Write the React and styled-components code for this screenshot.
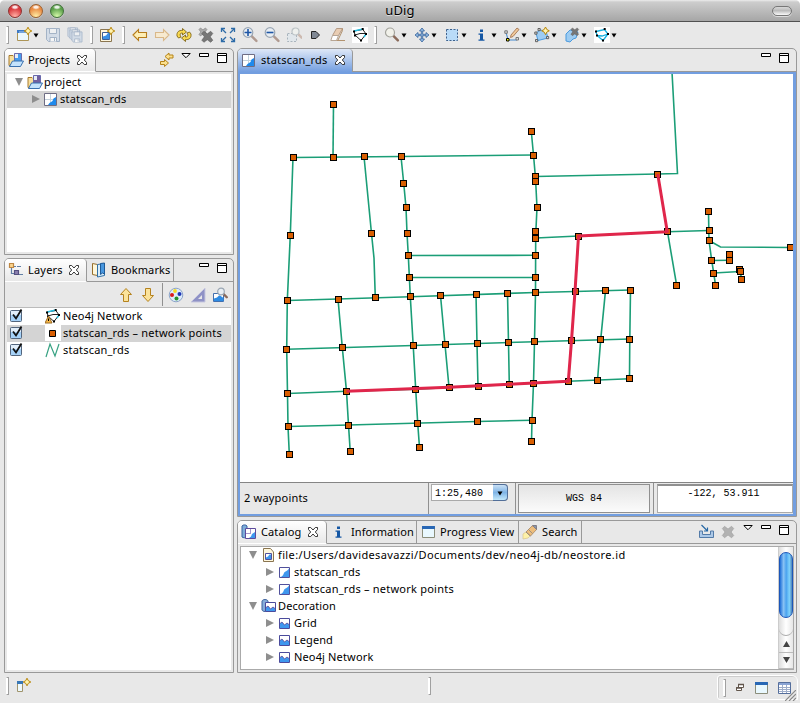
import React from 'react';
import styled, { createGlobalStyle, css } from 'styled-components';

const Global = createGlobalStyle`
  * { box-sizing: border-box; }
  html, body { margin: 0; padding: 0; background: #fff; }
  body { width: 800px; height: 703px; overflow: hidden; font: 11px/17px 'Noto Sans', 'Open Sans', sans-serif; color: #000; }
  svg { display: block; flex: none; }
`;

const Window = styled.div`
  width: 800px;
  height: 703px;
  display: flex;
  flex-direction: column;
  background: #e8e8e8;
  border-radius: 5px 5px 0 0;
  overflow: hidden;
`;

const TitleBar = styled.header`
  height: 22px;
  flex: none;
  display: grid;
  grid-template-columns: 100px 1fr 100px;
  align-items: center;
  background: linear-gradient(#ececec 0, #cdcdcd 2px, #a6a6a6 21px);
  border-bottom: 1px solid #515151;
`;
const Lights = styled.div`
  display: flex;
  gap: 7px;
  padding-left: 8px;
`;
const Light = styled.span`
  width: 14px;
  height: 14px;
  border-radius: 50%;
  border: 1px solid ${(p) => p.$edge};
  background: radial-gradient(ellipse 4px 2.5px at 50% 18%, #fffd 40%, transparent 100%),
    radial-gradient(circle at 50% 95%, ${(p) => p.$glow} 5%, ${(p) => p.$tone} 65%);
  box-shadow: 0 1px 0 #ddd8;
`;
const Title = styled.div`
  text-align: center;
  font-size: 13px;
  letter-spacing: 0.1px;
  text-shadow: 0 1px 0 #ddd;
`;
const Pill = styled.span`
  justify-self: end;
  margin-right: 8px;
  width: 20px;
  height: 10px;
  border: 1px solid #777;
  border-radius: 5px;
  background: linear-gradient(#d8d8d8, #bbb 45%, #fafafa);
  box-shadow: 0 1px 0 #ddd;
`;

const Toolbar = styled.div`
  height: 26px;
  flex: none;
  display: flex;
  align-items: center;
  padding-left: 6px;
`;
const Grip = styled.span`
  width: 3px;
  height: 18px;
  flex: none;
  margin-left: ${(p) => p.$before || 0}px;
  margin-right: ${(p) => p.$after || 0}px;
  border: 1px solid #a0a0a0;
  border-left-color: #fff;
  background: #fff;
`;
const Slot = styled.span`
  width: ${(p) => p.$w || 22}px;
  height: 22px;
  flex: none;
  display: flex;
  align-items: center;
  gap: 1px;
  padding-left: 3px;
`;

const Body = styled.div`
  height: 625px;
  flex: none;
  display: grid;
  grid-template-columns: 230px 560px;
  column-gap: 3px;
  padding-left: 4px;
`;
const Column = styled.div`
  display: flex;
  flex-direction: column;
  gap: 3px;
`;
const Panel = styled.section`
  height: ${(p) => p.$h}px;
  flex: none;
  display: flex;
  flex-direction: column;
  border: 1px solid #999;
  border-radius: 5px 5px 0 0;
  overflow: hidden;
  background: #e8e8e8;
`;
const TabBar = styled.div`
  height: 23px;
  flex: none;
  display: flex;
`;
const Tab = styled.div`
  width: ${(p) => p.$w}px;
  flex: none;
  display: flex;
  align-items: center;
  gap: ${(p) => p.$gap ?? 4}px;
  padding: 0 0 1px ${(p) => p.$pl ?? 3}px;
  border-right: 1px solid #999;
  border-bottom: 1px solid #999;
  white-space: nowrap;
  ${(p) => p.$active && css`
    border-bottom-color: transparent;
    border-top-right-radius: 4px;
    background: linear-gradient(#fff, #e8e8e8);
  `}
  ${(p) => p.$blue && css`
    border-bottom: 0;
    padding-bottom: 2px;
    border-top-right-radius: 4px;
    background: linear-gradient(#dfe8f7, #729ee0);
  `}
`;
const TabRest = styled.div`
  flex: 1;
  display: flex;
  justify-content: flex-end;
  border-bottom: 1px solid #999;
  padding: 4px ${(p) => p.$pr || 7}px 0 0;
`;
const Label = styled.span`
  letter-spacing: ${(p) => p.$ls ?? 0.2}px;
  white-space: pre;
`;
const Pane = styled.div`
  flex: 1;
  min-height: 0;
  margin: 2px 2px 2px;
  background: #fff;
  ${(p) => p.$flush && css`margin-top: 0; border-top: 1px solid #bbb;`}
`;
const TreeRow = styled.div`
  height: 17px;
  display: flex;
  align-items: center;
  padding: 0 0 2px ${(p) => p.$indent}px;
  background: ${(p) => (p.$selected ? '#d4d4d4' : 'transparent')};
`;
const Twist = styled.span`
  width: 0;
  height: 0;
  flex: none;
  ${(p) => p.$open
    ? css`border: 4.5px solid transparent; border-top: 8px solid #8e8e8e; border-bottom: 0; margin-right: 4px;`
    : css`border: 4.5px solid transparent; border-left: 8px solid #8e8e8e; border-right: 0; margin: 0 3px 0 1px;`}
`;
const Glyph = styled.span`
  width: 16px;
  height: 16px;
  flex: none;
  margin-right: ${(p) => p.$gap ?? 1}px;
`;
const LayerTools = styled.div`
  height: 25px;
  flex: none;
  display: flex;
  align-items: center;
  justify-content: flex-end;
  padding-right: 3px;
`;
const Divider = styled.span`
  width: 1px;
  height: 23px;
  margin: 0 2px 0 3px;
  background: #909090;
`;

const MapFrame = styled.div`
  flex: 1;
  display: flex;
  flex-direction: column;
  margin: 0 -1px -1px;
  padding: 2px 3px 2px 2px;
  background: #729ee0;
  border: 1px solid #999;
  border-top: 0;
`;
const MapStatus = styled.div`
  height: 32px;
  flex: none;
  display: grid;
  grid-template-columns: 189px 87px 138px 1fr;
  background: #e8e8e8;
  border-top: 1px solid #858585;
`;
const StatusCell = styled.div`
  display: flex;
  align-items: center;
  padding: 0 0 2px 4px;
  border-right: 1px solid #909090;
`;
const ScaleCell = styled.div`
  padding: 1px 0 0 2px;
  border-right: 1px solid #909090;
`;
const Scale = styled.div`
  width: 77px;
  height: 17px;
  display: flex;
  justify-content: space-between;
  padding-left: 3px;
  background: #fff;
  border: 1px solid #aaa;
  border-right: 0;
  border-radius: 0 4px 4px 0;
  font: 10px/17px 'Liberation Mono', monospace;
`;
const ScaleButton = styled.span`
  width: 15px;
  height: 17px;
  margin-top: -1px;
  padding: 6px 0 0 4px;
  border: 1px solid #526f99;
  border-left: 0;
  border-radius: 0 4px 4px 0;
  background: linear-gradient(#c9e0f5, #7fb4e6 50%, #c4e9fb);
`;
const CrsCell = styled.div`
  padding: 1px 3px 1px 2px;
  border-right: 1px solid #909090;
`;
const Crs = styled.div`
  height: 29px;
  border: 1px solid #909090;
  background: linear-gradient(#e4e4e4, #fbfbfb);
  text-align: center;
  font: 10px/28px 'Liberation Mono', monospace;
`;
const Coord = styled.div`
  margin: 1px 0 1px 3px;
  height: 29px;
  border: 1px solid #aaa;
  border-top: 2px solid #909090;
  background: #fff;
  text-align: center;
  padding-right: 3px;
  font: 10px/15px 'Liberation Mono', monospace;
`;

const CatalogPane = styled.div`
  flex: 1;
  display: flex;
  margin: 2px 2px;
  border: 1px solid #aaa;
  background: #fff;
  min-height: 0;
`;
const Tree = styled.div`
  flex: 1;
`;
const ScrollTrack = styled.div`
  width: 15px;
  display: flex;
  flex-direction: column;
  border-left: 1px solid #ccc;
  background: linear-gradient(90deg, #ddd, #fff 50%, #e6e6e6);
`;
const Thumb = styled.div`
  height: 66px;
  margin-top: 5px;
  border: 1px solid #1c56b8;
  border-radius: 7px;
  background: linear-gradient(90deg, #1f6fd8, #8ac3f4 30%, #4aa2ee 52%, #7fd2fc 78%, #4f83b8);
`;
const TrackEnd = styled.div`
  height: 18px;
  border-bottom: 1px solid #aaa;
  border-radius: 0 0 7px 7px;
`;
const ScrollButton = styled.div`
  flex: 1;
  display: grid;
  place-items: center;
  border-bottom: 1px solid #bbb;
`;

const StatusBar = styled.footer`
  flex: 1;
  display: flex;
  padding: 4px 2px 0 6px;
`;
const FastViews = styled.div`
  margin: -2px 0 0 auto;
  width: 81px;
  height: 25px;
  display: flex;
  align-items: center;
  padding-left: 5px;
  border: 1px solid #fff;
  border-radius: 3px 6px 0 3px;
  box-shadow: inset 1px 1px 0 #ccc;
`;
const ResizeCorner = styled.span`
  align-self: flex-end;
  margin: 0 -3px -2px -8px;
`;

const G = '#b8860b';
const Star = ({ x, y }) => (
  <path d={`M${x} ${y - 3.8}l1.3 2.5 2.5 1.3-2.5 1.3-1.3 2.5-1.3-2.5-2.5-1.3 2.5-1.3z`} fill="#fff4b0" stroke={G} strokeWidth="1" />
);
const Cross = ({ fill = '#666', edge = '#555', x = 0, y = 0, s = 1 }) => (
  <path transform={`translate(${x} ${y}) scale(${s})`} d="M1.500 4L4 1.500l4 3 4-3L14.500 4l-3 4 3 4-2.500 2.500-4-3-4 3L1.500 12l3-4z" fill={fill} stroke={edge} strokeWidth=".6" />
);
const Lens = ({ x = 6.5, y = 6, r = 4.8, fill = '#e9eef3', ring = '#9aa6b3', handle = '#8b6b5b' }) => (
  <g>
    <path d={`M${x + r * 0.7} ${y + r * 0.7}L${x + r * 1.75} ${y + r * 1.75}`} stroke={handle} strokeWidth="2.4" strokeLinecap="round" />
    <circle cx={x} cy={y} r={r} fill={fill} stroke={ring} strokeWidth="1.2" />
  </g>
);
const Floppy = ({ x = 1, y = 1, s = 1 }) => (
  <g transform={`translate(${x} ${y}) scale(${s})`} fill="#d3dce7" stroke="#a3b3c6">
    <path d="M.5.500h13v13h-11l-2-2z" />
    <path d="M3.500.500h7v5h-7z" fill="#eef0f2" />
    <path d="M4 13.500v-4h6.500v4M8.500 10v3" fill="#f6f6f6" />
  </g>
);
const Folder = ({ flag }) => (
  <g>
    <path d="M1 3.500h4l1 1h1v9H1z" fill="#f8df9c" stroke="#a77a2c" />
    <path d="M6.500 1.500h7v8h-7z" fill={flag ? '#70609f' : '#479cec'} stroke="#6a6aac" />
    <path d="M7 2h3v4H7z" fill="#e6ecf7" />
    <path d="M1.500 14.500L4.500 9h11l-3 5.500z" fill="#c3e2fc" stroke="#3970ae" />
  </g>
);
const Network = ({ plate, dark }) => (
  <g>
    {plate && <path d="M0 0h16v16H0z" fill="#fff" />}
    {dark ? (
      <g fill="none">
        <path d="M3 8l5-1.500 6 0M2 4l9-1.500M3 8l6 5.500 5-6.500-3.500-5M2 4l1 4" stroke="#222" />
        <path d="M2 4l9-2M14 7l-2 3" stroke="#27bcde" strokeWidth="1.500" />
      </g>
    ) : (
      <path d="M2 4.500L10.500 2.500 14 7l-5 6.500L3 8.500zM3 8.500l5 .500 6-2" fill="none" stroke="#12b0e0" strokeWidth="1.300" />
    )}
    <path d="M1 3.500h2v2H1zM9.700 1h2v2h-2zM13 6h2v2h-2zM8 12.500h2v2H8zM2 7.500h2v2H2z" fill="#000" />
  </g>
);

const art = {
  newWin: <><path d="M1.500 3.500h11v10h-11z" fill="#eaf7fe" stroke="#ad9557" /><path d="M1 3h12v3H1z" fill="#3d79c4" /><path d="M3 5h8" stroke="#a9cff5" /><Star x={12} y={4} /></>,
  save: <Floppy />,
  saveAll: <><Floppy x={0.500} y={0.500} s={0.75} /><Floppy x={2.500} y={2.500} s={0.75} /><Floppy x={4.500} y={4.500} s={0.78} /></>,
  newMap: <><path d="M1.500 2.500h11v12h-11z" fill="#fdf6df" stroke="#8b7650" /><path d="M3.500 5.500h7v7h-7z" fill="#fff" stroke="#3d5e94" /><path d="M4 12V9.500l3-1 2-2.500h1.500v6z" fill="#3a90e6" /><Star x={12} y={4} /></>,
  back: <path d="M1 8l5.500-5.500v3h8v5h-8v3z" fill="#fdeeb5" stroke="#b77d1c" strokeWidth="1.1" />,
  fwd: <path d="M15 8L9.500 2.500v3h-8v5h8v3z" fill="#f7ead0" stroke="#d9b88a" strokeWidth="1.1" />,
  refresh: <g fill="#f9d950" stroke="#806717" strokeWidth=".9"><path d="M1 9C.5 5 3 3 6.500 3.500V1.500l4 3.500-4 3V6C4 6 3.500 7.500 5 10l-2.500 1z" /><path d="M15 7c.5 4-2 6-5.500 5.500v2l-4-3.500 4-3v2c2.500 0 3-1.500 1.500-4L13.500 5z" /></g>,
  removeAll: <><Cross x={0} y={0} s={0.62} fill="#aaa" /><Cross x={2.500} y={3} s={0.85} fill="#777" /></>,
  fit: <g stroke="#2e6ca8" strokeWidth="1.300" fill="none"><path d="M1.500 5V1.500H5M11 1.500h3.500V5M14.500 11v3.500H11M5 14.500H1.500V11" /><path d="M2 2l4 4M14 2l-4 4M14 14l-4-4M2 14l4-4" /></g>,
  zoomIn: <><Lens x={6} y={5.500} handle="#b09a90" /><path d="M2.500 5.500h7M6 2v7" stroke="#1d55a5" strokeWidth="1.600" /></>,
  zoomOut: <><Lens x={6} y={5.500} handle="#b09a90" /><path d="M2.500 5.500h7" stroke="#1d55a5" strokeWidth="1.600" /></>,
  zoomSel: <g><path d="M1.500 6.500h9v8h-9z" fill="#e1e7eb" stroke="#a9b4bd" strokeDasharray="2 1.500" /><Lens x={9.500} y={4.500} r={3.500} fill="#eef0ed" ring="#bcc3c6" handle="#cdbab0" /></g>,
  tag: <path d="M3.500 4.500H8l3.500 3.500L8 11.500H3.500z" fill="#808894" stroke="#252525" />,
  eraser: <><path d="M6.500 1.500h6L8.500 8.500h-6z" fill="#e9cdb3" stroke="#b59a84" /><path d="M2.500 8.500h6L6.500 13.500H.8z" fill="#fff" stroke="#b7a696" /><path d="M6.500 13.500h8.500M12.500 1.500v2L8 13" stroke="#b29370" fill="none" /></>,
  net: <Network plate />,
  netDark: <Network plate dark />,
  lens: <Lens x={6} y={5.500} r={4.500} fill="#f1f1ea" ring="#a3a39c" />,
  pan: <path d="M8 1l2.500 3H8.700v3.300H12V5.500L15 8l-3 2.500V8.700H8.700V12h1.800L8 15l-2.500-3h1.800V8.700H4v1.800L1 8l3-2.500v1.800h3.300V4H5.500z" fill="#93b9e2" stroke="#245590" strokeWidth=".7" />,
  select: <><path d="M2 2h12v12H2z" fill="#b9dbf8" /><path d="M2.500 2.500h11v11h-11z" fill="none" stroke="#41618a" strokeDasharray="2 1.500" /></>,
  info: <path d="M6 2.500h3v2.500H6zM4.500 6.500H9v6h1.500v1.300h-6v-1.300H6V7.700H4.500z" fill="#1557a4" />,
  pencil: <><path d="M2 5l2 8h9" fill="none" stroke="#4388cd" /><path d="M.8 3.800h2.500v2.500H.8zM12 10.500h2.500V13H12z" fill="#ddd" stroke="#777" /><path d="M2.500 11.500H5V14H2.500z" fill="#ff0" stroke="#000" /><path d="M7 8L13 1l2 1.500L9 9.500 6.500 10.500z" fill="#f0c99b" stroke="#9a6844" strokeWidth=".8" /></>,
  polyAdd: <><path d="M2 6l4-3 6 1 2 7-10 2.500z" fill="#9dccf2" stroke="#4b9ade" /><g fill="#ddd" stroke="#555" strokeWidth=".9"><path d="M.8 5H3v2.200H.8zM4 1.500h2.200v2.200H4zM12.500 9.500h2.200v2.200h-2.200zM1.500 12.500h2.200v2.200H1.500z" /></g><Star x={11.500} y={3.800} /></>,
  polyDel: <><path d="M2 7l4-4 8 2-2 6-3 1-3 3-4-1z" fill="#9dccf2" stroke="#4b9ade" /><Cross x={6} y={0} s={0.6} fill="#777" /></>,
  link: <g fill="#fbe08e" stroke="#b58319"><path d="M6 4.500l4-3.500v2h4v3h-4v2z" /><path d="M9.500 11l-4 3.500v-2h-4v-3h4v-2z" /></g>,
  menu: <path d="M.8.500h8.400L5 4.700z" fill="#fff" stroke="#000" />,
  min: <path d="M.5.500h9v3h-9z" fill="#fff" stroke="#000" />,
  max: <><path d="M.5.500h9v9h-9z" fill="#fff" stroke="#000" /><path d="M0 2.500h10" stroke="#000" /></>,
  close: <path d="M.5.500h2.200L5 3l2.300-2.500h2.200v2L7.300 5l2.200 2.500v2H7.300L5 7 2.700 9.500H.5v-2L2.700 5 .5 2.500z" fill="#fff" stroke="#222" strokeWidth=".9" />,
  folder: <Folder />,
  folderFlag: <Folder flag />,
  mapDoc: <><path d="M1.500 2.500h12v12h-12z" fill="#fff" stroke="#6e6d84" /><path d="M7.500 3v11M2 8.500h11" stroke="#c3d2dd" /><path d="M5 14l1.500-2 3-2 1-2.500L13 6v8z" fill="#1f8aec" /></>,
  layersTab: <><path d="M3.500 6v5.500h3M6 4.500h2M9 4.500h4M11 12.500h4" stroke="#6280a5" fill="none" strokeWidth="1.200" /><path d="M1.500 1.500h4v4h-4z" fill="#fbd48d" stroke="#be8742" strokeWidth="1.200" /><path d="M6.500 8.500h4v4h-4z" fill="#8b80af" stroke="#555080" strokeWidth="1.200" /></>,
  book: <><path d="M1.500 1.500l5 1v11l-5-1z" fill="#fff7da" stroke="#966f2c" /><path d="M6.500 2.500l7-1v12l-7 1.500z" fill="#d7ecfb" stroke="#3170a6" /><path d="M9.500 1.500v11l2-1.500 2 1V1z" fill="#4897df" stroke="#1e5a97" /></>,
  up: <path d="M8 1.500l5.500 6H10.500v7h-5v-7h-3z" fill="#fbe39b" stroke="#b5821e" />,
  down: <path d="M8 14.500l5.500-6H10.500v-7h-5v7h-3z" fill="#fbe39b" stroke="#b5821e" />,
  palette: <><circle cx="8" cy="8" r="6.800" fill="#dcebfa" stroke="#8ca4c8" /><circle cx="7" cy="4" r="1.900" fill="#f8dc22" /><circle cx="4" cy="8" r="2" fill="#d81b1b" /><circle cx="11.500" cy="7" r="2" fill="#1d34b4" /><circle cx="8.500" cy="11.500" r="2" fill="#24942b" /></>,
  triangle: <><path d="M15 1v14H1z" fill="#8f92c6" stroke="#c7c8df" /><path d="M12 8v4H8z" fill="#e8e8e8" /></>,
  inspect: <><path d="M1.500 6.500h10v8h-10z" fill="#fff" stroke="#426fae" /><path d="M2 14v-2.500l3-1 2-2h1l3.500 2.500v3z" fill="#2e8be3" /><Lens x={9} y={4.500} r={3.300} /></>,
  netWarn: <><Network dark /><path d="M3.500 8l3.500 7H0z" fill="#f6b748" stroke="#9a6a23" /><path d="M3.500 10.500v2.500" stroke="#000" /></>,
  point: <><path d="M0 0h16v16H0z" fill="#fff" /><path d="M4.500 5.500h6v6h-6z" fill="#d95f02" stroke="#000" /></>,
  zigzag: <path d="M1 15L5 2l5 12 4-12" fill="none" stroke="#38a283" strokeWidth="1.200" />,
  catalogTab: <><path d="M1 2c1-1.500 4-1.500 5 0v11c-1 1-4 1-5 0z" fill="#7fadd9" stroke="#3863a0" /><path d="M4.500 4.500h10v10h-10z" fill="#fff" stroke="#5c4a9c" /><path d="M8 14l2-1.500 1-2.500 3-2v6z" fill="#3f97ee" /><path d="M9.500 5v5M5 9.500h5" stroke="#a896cc" /></>,
  windowI: <><path d="M1.500 2.500h12v11h-12z" fill="#e9f8fe" stroke="#8b8d7a" /><path d="M1 2h12.900v3H1z" fill="#2867b5" /></>,
  search: <><path d="M1 10l3-2 4 4-2 2-5 1z" fill="#fdf1a8" stroke="#d8c48a" strokeWidth=".7" /><path d="M4 8l6-6 4-.5.500 4L8.500 12z" fill="#edbd7c" stroke="#a8865f" strokeWidth=".8" /><path d="M4 8l4.500 4M6.500 5.500l4 4" stroke="#888" strokeWidth=".8" /><path d="M10.500 1.500h4v4z" fill="#8996ac" stroke="#667" strokeWidth=".6" /></>,
  importI: <><path d="M1.500 8v6.500h14V8h-3v3.500h-8V8z" fill="#acc8e7" stroke="#537ba8" /><path d="M3.500 2l6 6M9.500 4.500V8H6" stroke="#2768a5" strokeWidth="1.200" fill="none" /></>,
  crossDim: <Cross fill="#b2b2b2" edge="#999" s={0.88} x={1} y={1} />,
  fileMap: <><path d="M2.500 1.500h7l3 3.500v9.500h-10z" fill="#fff7dd" stroke="#8a7550" /><path d="M4.500 6.500h6v6h-6z" fill="#fff" stroke="#51519c" /><path d="M5 12v-1.500l2-1 1.500-2H10V12z" fill="#3f97ee" /></>,
  layer: <><path d="M2.500 3.500h10v10h-10z" fill="#fff" stroke="#51519c" /><path d="M3 13c3-.5 3-2 4-4s3-1.500 5-4.500V13z" fill="#3f97ee" /></>,
  deco: <><path d="M2.500 3.500h10v10h-10z" fill="#fff" stroke="#4b4b9c" /><path d="M3 13V8.500L5 7l2.500 3L10 8l2 1.500V13z" fill="#3f97ee" /><path d="M3 8.500L5 7l2.500 3L10 8l2 1.500" fill="none" stroke="#574795" strokeWidth=".8" /></>,
  decoDb: <><path d="M1 3c1-2 5-2 6 0v9c-1 2-5 2-6 0z" fill="#86aedb" stroke="#3d619c" /><path d="M4.500 4.500h10v9h-10z" fill="#fff" stroke="#4b4b9c" /><path d="M5 13V9.500L7 8l2.500 3L12 9l2 1.500V13z" fill="#3f97ee" /><path d="M5 9.500L7 8l2.500 3L12 9l2 1.500" fill="none" stroke="#574795" strokeWidth=".8" /></>,
  check: <><rect x="2.500" y="2.500" width="11" height="11" rx="1" fill="#a5d1f7" stroke="#53657c" /><path d="M3 3h10v4H3z" fill="#e1eefa" /><path d="M5 6.500l3 4 5.500-9" fill="none" stroke="#111" strokeWidth="1.800" /></>,
  fastNew: <><path d="M1.500 4.500h5v10h-5z" fill="#eef9fd" stroke="#a0946c" /><path d="M1 4h6v3H1z" fill="#3777b7" /><Star x={11} y={5} /></>,
  restore: <><path d="M3.500 2.500h5v3h-5zM1.500 5.500h5v3h-5z" fill="#fff" stroke="#62564c" /><path d="M3 2.500h6M1 6h6" stroke="#62564c" strokeWidth="1.500" /></>,
  table: <><path d="M1.500 2.500h12v11h-12z" fill="#fff" stroke="#566f9c" /><path d="M2 3h11v2H2z" fill="#8aa4d4" /><path d="M2 7.500h11M2 9.500h11M2 11.500h11M5.500 5v8M9.500 5v8" stroke="#9eadc9" /></>,
  corner: <path d="M0 11L11 0M4 11l7-7M8 11l3-3" stroke="#888" strokeWidth="1.200" />,
};

const Icon = ({ name, w = 16, h = w }) => (
  <svg width={w} height={h} viewBox={`0 0 ${w} ${h}`}>{art[name]}</svg>
);
const Arrow = () => (
  <svg width="6" height="5" viewBox="0 0 6 5"><path d="M.5.500h5L3 4.500z" /></svg>
);
const Closer = () => <Icon name="close" w={10} />;

const WindowControls = styled.div`
  display: flex;
  align-items: flex-start;
  gap: 8px;
`;
const Nudge = styled.span`
  margin: ${(p) => p.$m};
`;

const tools = [
  { n: 'save' }, { n: 'saveAll', w: 23 }, { grip: [3, 3] },
  { n: 'newMap' }, { grip: [4, 4] },
  { n: 'back' }, { n: 'fwd' }, { n: 'refresh' }, { n: 'removeAll' }, { n: 'fit' }, { n: 'zoomIn' },
  { n: 'zoomOut' }, { n: 'zoomSel' }, { n: 'tag' }, { n: 'eraser' }, { n: 'netDark' }, { grip: [3, 4] },
  ...['lens', 'pan', 'select', 'info', 'pencil', 'polyAdd', 'polyDel', 'net'].map((n) => ({ n, w: 30, drop: true })),
];

const points = [
  [333.5, 104.5], [293, 157.5], [333, 157], [364, 156.5], [401, 156.5], [533.5, 155], [531.3, 131.5],
  [290.3, 235], [371.5, 233.5], [403.7, 183], [406, 207.5], [407, 233], [408.3, 255.5], [409, 277.5],
  [535.5, 176.5], [535.7, 181.5], [537, 207.5], [535.7, 231.5], [535.8, 238], [535.5, 255.3], [535.5, 277.5],
  [287.3, 300.5], [338, 299], [375.3, 297.7], [410.3, 296.7], [440.5, 295.5], [476, 294.5], [507.5, 293.5],
  [535.5, 292.5], [575, 291.5], [605.5, 290.7], [630.5, 290],
  [657.7, 174], [667.5, 231.7], [578.5, 236], [676.7, 285.7], [708.5, 211], [709, 230.5], [709, 240.5], [790, 247.5],
  [711.7, 260.5], [729.7, 254], [729.7, 260.3], [713.7, 273], [739.7, 269], [740.3, 271.5], [741.8, 279], [715.5, 285],
  [286.7, 349.2], [342.3, 347.5], [413.2, 345.5], [445, 344.5], [477, 343.5], [508.5, 342.5], [534.5, 341.7],
  [571.5, 340.7], [600.7, 339.7], [629.8, 339],
  [287.5, 393.5], [346.5, 391.3], [415.7, 389.3], [449, 387.3], [478, 386.3], [509.3, 384.5], [533.5, 383.3],
  [568.5, 381.3], [597.5, 380.3], [629.5, 378.7],
  [288, 426.5], [348.5, 425], [417.7, 423], [477, 421.5], [532, 420.3],
  [289.3, 454], [350.2, 451], [419.5, 447.5], [531.5, 441.7],
];
const roads = [
  '333.5,104.5 333,157', '293,157.5 401,156.5 533.5,155',
  '293,157.5 290.3,235 287.3,300.5 286.7,349.2 287.5,393.5 288,426.5 289.3,454',
  '364,156.5 371.5,233.5 374,258 375.3,297.7',
  '401,156.5 403.7,183 406,207.5 407,233 408.3,255.5 410.3,296.7 413.2,345.5 415.7,389.3 417.7,423 419.5,447.5',
  '408.3,255.5 535.5,255.3', '409,277.5 535.5,277.5',
  '531.3,131.5 533.5,155 535.5,178 537,207.5 535.7,235 535.5,292.5 534.5,341.7 533.5,383.3 532,420.3 531.5,441.7',
  '535.5,176.5 657.7,174 677.500,173.500 672,72', '535.8,238 578.5,236 667.5,231.7 709,230.5', '667.5,231.7 676.7,285.7',
  '708.5,211 709,240.5 711.7,260.5 713.7,273 715.5,285', '709,240.5 720.5,247 790,247.5', '711.7,260.5 729.7,260.3',
  '713.7,273 740,271.5 741.8,279',
  '287.3,300.5 338,299 410.3,296.7 535.5,292.5 575,291.5 630.5,290',
  '286.7,349.2 413.2,345.5 534.5,341.7 629.8,339',
  '287.5,393.5 346.5,391.3 415.7,389.3 568.5,381.3 629.5,378.7',
  '288,426.5 348.5,425 477,421.5 532,420.3',
  '338,299 342.3,347.5 346.5,391.3 348.5,425 350.2,451',
  '440.5,295.5 445,344.5 449,387.3', '476,294.5 477,343.5 478,386.3', '507.5,293.5 508.5,342.5 509.3,384.5',
  '605.5,290.7 600.7,339.7 597.5,380.3', '630.5,290 629.8,339 629.5,378.7', '578.5,236 575,291.5 568.5,381.3',
];
const route = '657.7,174 667.3,231.7 578.5,236 575,291.5 571.5,340.7 568.3,381.3 509.3,384.3 449,387.3 346.5,391.3';

const RoadMap = () => (
  <svg width="553" height="408" viewBox="240 74 553 408">
    <path d="M240 74h553v409H240z" fill="#fff" />
    <g fill="none" stroke="#1b9e77" strokeWidth="1.6">
      {roads.map((r) => <polyline key={r} points={r} />)}
    </g>
    <g fill="#d95f02" stroke="#000">
      {points.map(([x, y]) => <rect key={`${x},${y}`} x={Math.floor(x) - 2.5} y={Math.floor(y) - 2.5} width="6" height="6" />)}
    </g>
    <polyline points={route} fill="none" stroke="#e0264b" strokeWidth="3" strokeLinejoin="round" />
  </svg>
);

const Row = ({ indent, open, selected, icon, gap, ls, children }) => (
  <TreeRow $indent={indent} $selected={selected}>
    <Twist $open={open} />
    <Glyph $gap={gap}><Icon name={icon} /></Glyph>
    <Label $ls={ls}>{children}</Label>
  </TreeRow>
);

const CheckCell = styled.span`
  width: 38px;
  flex: none;
  padding-left: 1px;
`;
const LayerRow = ({ icon, selected, ls, children }) => (
  <TreeRow $indent={0} $selected={selected}>
    <CheckCell><Icon name="check" /></CheckCell>
    <Glyph $gap={2}><Icon name={icon} /></Glyph>
    <Label $ls={ls}>{children}</Label>
  </TreeRow>
);

export default function App() {
  return (
    <>
      <Global />
      <Window>
        <TitleBar>
          <Lights>
            <Light $edge="#8d3230" $tone="#d8373b" $glow="#ffaaa0" />
            <Light $edge="#9a6030" $tone="#e98a42" $glow="#ffe9a0" />
            <Light $edge="#40703a" $tone="#5a9f49" $glow="#cff5a5" />
          </Lights>
          <Title>uDig</Title>
          <Pill />
        </TitleBar>
        <Toolbar>
          <Grip $after={4} />
          <Slot $w={29}><Icon name="newWin" /><Arrow /></Slot>
          {tools.map((t, i) => (t.grip
            ? <Grip key={i} $before={t.grip[0]} $after={t.grip[1]} />
            : <Slot key={i} $w={t.w}><Icon name={t.n} />{t.drop && <Arrow />}</Slot>))}
        </Toolbar>
        <Body>
          <Column>
            <Panel $h={207}>
              <TabBar>
                <Tab $active $w={91} $gap={4}>
                  <Icon name="folder" /><Label $ls={0.12}>Projects</Label><Nudge $m="0 0 0 3px"><Closer /></Nudge>
                </Tab>
                <TabRest $pr={6}>
                  <WindowControls>
                    <Nudge $m="-1px -2px 0 0"><Icon name="link" /></Nudge>
                    <Icon name="menu" w={10} h={7} />
                    <Icon name="min" w={10} h={4} />
                    <Icon name="max" w={10} />
                  </WindowControls>
                </TabRest>
              </TabBar>
              <Pane>
                <Row indent={8} open icon="folderFlag">project</Row>
                <Row indent={24} selected icon="mapDoc">statscan_rds</Row>
              </Pane>
            </Panel>
            <Panel $h={415}>
              <TabBar>
                <Tab $active $w={82} $gap={4}>
                  <Icon name="layersTab" /><Label>Layers</Label><Nudge $m="0 0 0 2px"><Closer /></Nudge>
                </Tab>
                <Tab $w={87} $pl={4} $gap={4}><Icon name="book" /><Label $ls={0.1}>Bookmarks</Label></Tab>
                <TabRest $pr={6}>
                  <WindowControls>
                    <Icon name="min" w={10} h={4} />
                    <Icon name="max" w={10} />
                  </WindowControls>
                </TabRest>
              </TabBar>
              <LayerTools>
                <Slot><Icon name="up" /></Slot>
                <Slot><Icon name="down" /></Slot>
                <Divider />
                <Slot $w={22}><Icon name="palette" /></Slot>
                <Slot><Icon name="triangle" /></Slot>
                <Slot $w={21}><Icon name="inspect" /></Slot>
              </LayerTools>
              <Pane $flush>
                <LayerRow icon="netWarn" ls={0.15}>Neo4j Network</LayerRow>
                <LayerRow icon="point" selected ls={0.2}>statscan_rds – network points</LayerRow>
                <LayerRow icon="zigzag">statscan_rds</LayerRow>
              </Pane>
            </Panel>
          </Column>
          <Column>
            <Panel $h={469}>
              <TabBar>
                <Tab $blue $w={115} $gap={3}>
                  <Icon name="mapDoc" /><Nudge $m="0 0 0 1px"><Label>statscan_rds</Label></Nudge><Nudge $m="0 0 0 4px"><Closer /></Nudge>
                </Tab>
                <TabRest>
                  <WindowControls>
                    <Icon name="min" w={10} h={4} />
                    <Icon name="max" w={10} />
                  </WindowControls>
                </TabRest>
              </TabBar>
              <MapFrame>
                <RoadMap />
                <MapStatus>
                  <StatusCell><Label>2 waypoints</Label></StatusCell>
                  <ScaleCell>
                    <Scale>1:25,480<ScaleButton><Arrow /></ScaleButton></Scale>
                  </ScaleCell>
                  <CrsCell><Crs>WGS 84</Crs></CrsCell>
                  <Coord>-122, 53.911</Coord>
                </MapStatus>
              </MapFrame>
            </Panel>
            <Panel $h={153}>
              <TabBar>
                <Tab $active $w={89}>
                  <Icon name="catalogTab" /><Label $ls={0.12}>Catalog</Label><Nudge $m="0 0 0 3px"><Closer /></Nudge>
                </Tab>
                <Tab $w={90} $pl={4}><Icon name="info" /><Label $ls={0.05}>Information</Label></Tab>
                <Tab $w={102} $pl={4} $gap={3}><Icon name="windowI" /><Label $ls={0.15}>Progress View</Label></Tab>
                <Tab $w={63}><Icon name="search" /><Label $ls={0.1}>Search</Label></Tab>
                <TabRest>
                  <WindowControls>
                    <Nudge $m="-2px -2px 0 0"><Icon name="importI" /></Nudge>
                    <Nudge $m="-1px 0 0"><Icon name="crossDim" /></Nudge>
                    <Nudge $m="0 0 0 -1px"><Icon name="menu" w={10} h={7} /></Nudge>
                    <Icon name="min" w={10} h={4} />
                    <Icon name="max" w={10} />
                  </WindowControls>
                </TabRest>
              </TabBar>
              <CatalogPane>
                <Tree>
                  <Row indent={8} open icon="fileMap" ls={0.37}>file:/Users/davidesavazzi/Documents/dev/neo4j-db/neostore.id</Row>
                  <Row indent={24} icon="layer">statscan_rds</Row>
                  <Row indent={24} icon="layer" ls={0.23}>statscan_rds – network points</Row>
                  <Row indent={8} open icon="decoDb" ls={0.1}>Decoration</Row>
                  <Row indent={24} icon="deco">Grid</Row>
                  <Row indent={24} icon="deco" ls={0.05}>Legend</Row>
                  <Row indent={24} icon="deco" ls={0.15}>Neo4j Network</Row>
                </Tree>
                <ScrollTrack>
                  <Thumb />
                  <TrackEnd />
                  <ScrollButton><svg width="7" height="6"><path d="M0 6h7L3.500 0z" fill="#444" /></svg></ScrollButton>
                  <ScrollButton><svg width="7" height="6"><path d="M0 0h7L3.500 6z" fill="#444" /></svg></ScrollButton>
                </ScrollTrack>
              </CatalogPane>
            </Panel>
          </Column>
        </Body>
        <StatusBar>
          <Grip />
          <Nudge $m="0 0 0 7px"><Icon name="fastNew" /></Nudge>
          <Grip $before={396} />
          <FastViews>
            <Grip $after={9} />
            <Icon name="restore" w={11} />
            <Nudge $m="0 0 0 8px"><Icon name="windowI" /></Nudge>
            <Nudge $m="0 0 0 7px"><Icon name="table" /></Nudge>
            <ResizeCorner><Icon name="corner" w={11} /></ResizeCorner>
          </FastViews>
        </StatusBar>
      </Window>
    </>
  );
}
